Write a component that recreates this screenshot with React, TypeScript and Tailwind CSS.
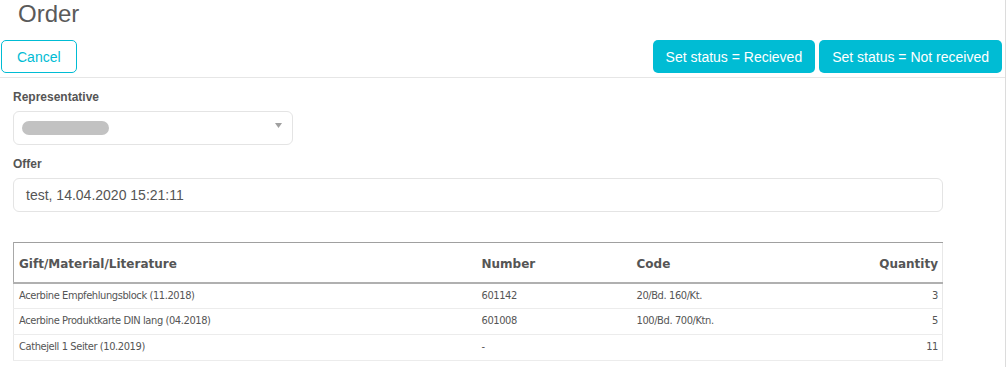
const rows = [
  { name: "Acerbine Empfehlungsblock (11.2018)", number: "601142", code: "20/Bd. 160/Kt.", qty: 3 },
  { name: "Acerbine Produktkarte DIN lang (04.2018)", number: "601008", code: "100/Bd. 700/Ktn.", qty: 5 },
  { name: "Cathejell 1 Seiter (10.2019)", number: "-", code: "", qty: 11 },
];

const arial = { fontFamily: '"Liberation Sans", Arial, sans-serif' };
const verdana = { fontFamily: '"DejaVu Sans", Verdana, sans-serif' };
const tahoma = { fontFamily: '"DejaVu Sans Condensed", "DejaVu Sans", sans-serif' };

export default function App() {
  return (
    <div className="w-[1008px] h-[367px] overflow-hidden bg-white text-[#555]" style={arial}>
      <div className="w-[1006px] h-full border-r border-[#dcdcdc]">
        {/* header */}
        <div className="h-[40px] pl-[18px] pt-[2px] text-[24px] leading-[24px] text-[#5a5a5a]">Order</div>
        <div className="flex items-center justify-between pl-[1px] pr-[3px] pb-[4px] border-b border-[#e6e6e6]">
          <button className="h-[33px] px-[15px] pt-[2px] rounded-[5px] border border-[#00bcd4] text-[#00bcd4] text-[14px] bg-white">
            Cancel
          </button>
          <div className="flex gap-[4px]">
            <button className="h-[33px] px-[13px] pt-[2px] rounded-[5px] bg-[#00bcd4] text-white text-[14px]">
              Set status = Recieved
            </button>
            <button className="h-[33px] px-[13px] pt-[2px] rounded-[5px] bg-[#00bcd4] text-white text-[14px]">
              Set status = Not received
            </button>
          </div>
        </div>

        {/* form */}
        <div className="pl-[13px] pt-[11px]">
          <div className="text-[12px] leading-[16px] font-bold text-[#555]">Representative</div>
          <div className="mt-[6px] w-[280px] h-[34px] rounded-[6px] border border-[#e4e4e4] flex items-center justify-between pl-[8px] pr-[10px]">
            <div className="w-[87px] h-[14px] rounded-full bg-[#c2c2c2] blur-[0.5px]" />
            <svg width="7" height="5" viewBox="0 0 7 5" className="mb-[6px]">
              <path d="M0 0h7L3.5 5z" fill="#a0a0a0" />
            </svg>
          </div>

          <div className="mt-[11px] text-[12px] leading-[16px] font-bold text-[#555]">Offer</div>
          <div className="mt-[6px] w-[930px] h-[34px] rounded-[6px] border border-[#e4e4e4] flex items-center pl-[12px] text-[14px] text-[#555]">
            test, 14.04.2020 15:21:11
          </div>

          <table className="mt-[30px] w-[930px] table-fixed border-collapse border-l border-r border-[#e8e8e8] text-[#555]">
            <colgroup>
              <col className="w-[463px]" />
              <col className="w-[155px]" />
              <col className="w-[170px]" />
              <col />
            </colgroup>
            <thead style={verdana}>
              <tr className="h-[40px] border-t border-[#a0a0a0] border-b-2 border-b-[#b0b0b0] text-[12px]">
                <th className="text-left pl-[5px] pt-[3px] font-bold border-l border-[#a8a8a8]">Gift/Material/Literature</th>
                <th className="text-left pl-[5px] pt-[3px] font-bold">Number</th>
                <th className="text-left pl-[5px] pt-[3px] font-bold">Code</th>
                <th className="text-right pr-[4px] pt-[3px] font-bold">Quantity</th>
              </tr>
            </thead>
            <tbody className="text-[11px] tracking-[-0.4px]" style={tahoma}>
              {rows.map((r) => (
                <tr key={r.name} className="h-[26px] border-b border-[#ececec]">
                  <td className="pl-[5px] whitespace-nowrap">{r.name}</td>
                  <td className="pl-[5px]">{r.number}</td>
                  <td className="pl-[5px]">{r.code}</td>
                  <td className="pr-[4px] text-right">{r.qty}</td>
                </tr>
              ))}
            </tbody>
          </table>
        </div>
      </div>
    </div>
  );
}
